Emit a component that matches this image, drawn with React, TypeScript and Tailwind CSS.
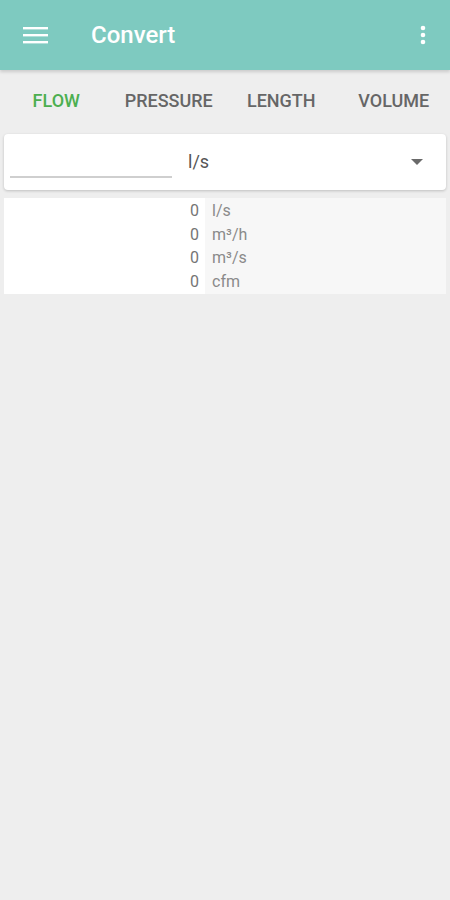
import React from "react";

export default function App() {
  const rows = [
    { v: "0", u: "l/s" },
    { v: "0", u: "m³/h" },
    { v: "0", u: "m³/s" },
    { v: "0", u: "cfm" },
  ];
  const tabs = ["FLOW", "PRESSURE", "LENGTH", "VOLUME"];
  return (
    <div className="w-[450px] h-[900px] bg-[#eeeeee] flex flex-col" style={{ fontFamily: "Roboto, 'Liberation Sans', sans-serif" }}>
      <div className="h-[70px] bg-[#7ecac0] flex items-center shadow-[0_2px_3px_rgba(0,0,0,0.15)] relative z-10">
        <div className="w-[70px] pl-[23px] flex items-center">
          <svg width="26" height="18" viewBox="0 0 26 18">
            <rect x="0" y="1" width="25" height="2.4" fill="#fff" />
            <rect x="0" y="8" width="25" height="2.4" fill="#fff" />
            <rect x="0" y="15" width="25" height="2.4" fill="#fff" />
          </svg>
        </div>
        <div className="ml-[21px] text-white text-[24px] font-medium flex-1">Convert</div>
        <div className="w-[40px] flex justify-center mr-[7px]">
          <svg width="8" height="20" viewBox="0 0 8 20">
            <circle cx="4" cy="3" r="2.3" fill="#fff" />
            <circle cx="4" cy="10" r="2.3" fill="#fff" />
            <circle cx="4" cy="17" r="2.3" fill="#fff" />
          </svg>
        </div>
      </div>
      <div className="h-[60px] grid grid-cols-4 items-center">
        {tabs.map((t, i) => (
          <div key={t} className={`text-center text-[18px] font-medium ${i === 0 ? "text-[#4caf50]" : "text-[#666666]"}`}>{t}</div>
        ))}
      </div>
      <div className="mx-[4px] mt-[4px] h-[56px] bg-white rounded-[4px] shadow-[0_1px_3px_rgba(0,0,0,0.2)] flex items-center">
        <div className="ml-[6px] w-[162px] h-[40px] border-b-2 border-[#cfcfcf] self-start mt-[4px]" />
        <div className="ml-[16px] text-[18px] text-[#555] flex-1 mb-[2px]">l/s</div>
        <svg width="12" height="6" viewBox="0 0 12 6" className="mr-[23px]">
          <polygon points="0,0 12,0 6,6" fill="#6a6a6a" />
        </svg>
      </div>
      <div className="mx-[4px] mt-[8px] flex">
        <div className="w-[201px] bg-white flex flex-col items-end pr-[6px] pt-[1px] pb-[1px]">
          {rows.map((r, i) => (
            <div key={i} className="h-[23.5px] leading-[23.5px] text-[16px] text-[#757575]">{r.v}</div>
          ))}
        </div>
        <div className="flex-1 bg-[#f7f7f7] flex flex-col pl-[7px] pt-[1px] pb-[1px]">
          {rows.map((r, i) => (
            <div key={i} className="h-[23.5px] leading-[23.5px] text-[16px] text-[#8a8a8a]">{r.u}</div>
          ))}
        </div>
      </div>
    </div>
  );
}
